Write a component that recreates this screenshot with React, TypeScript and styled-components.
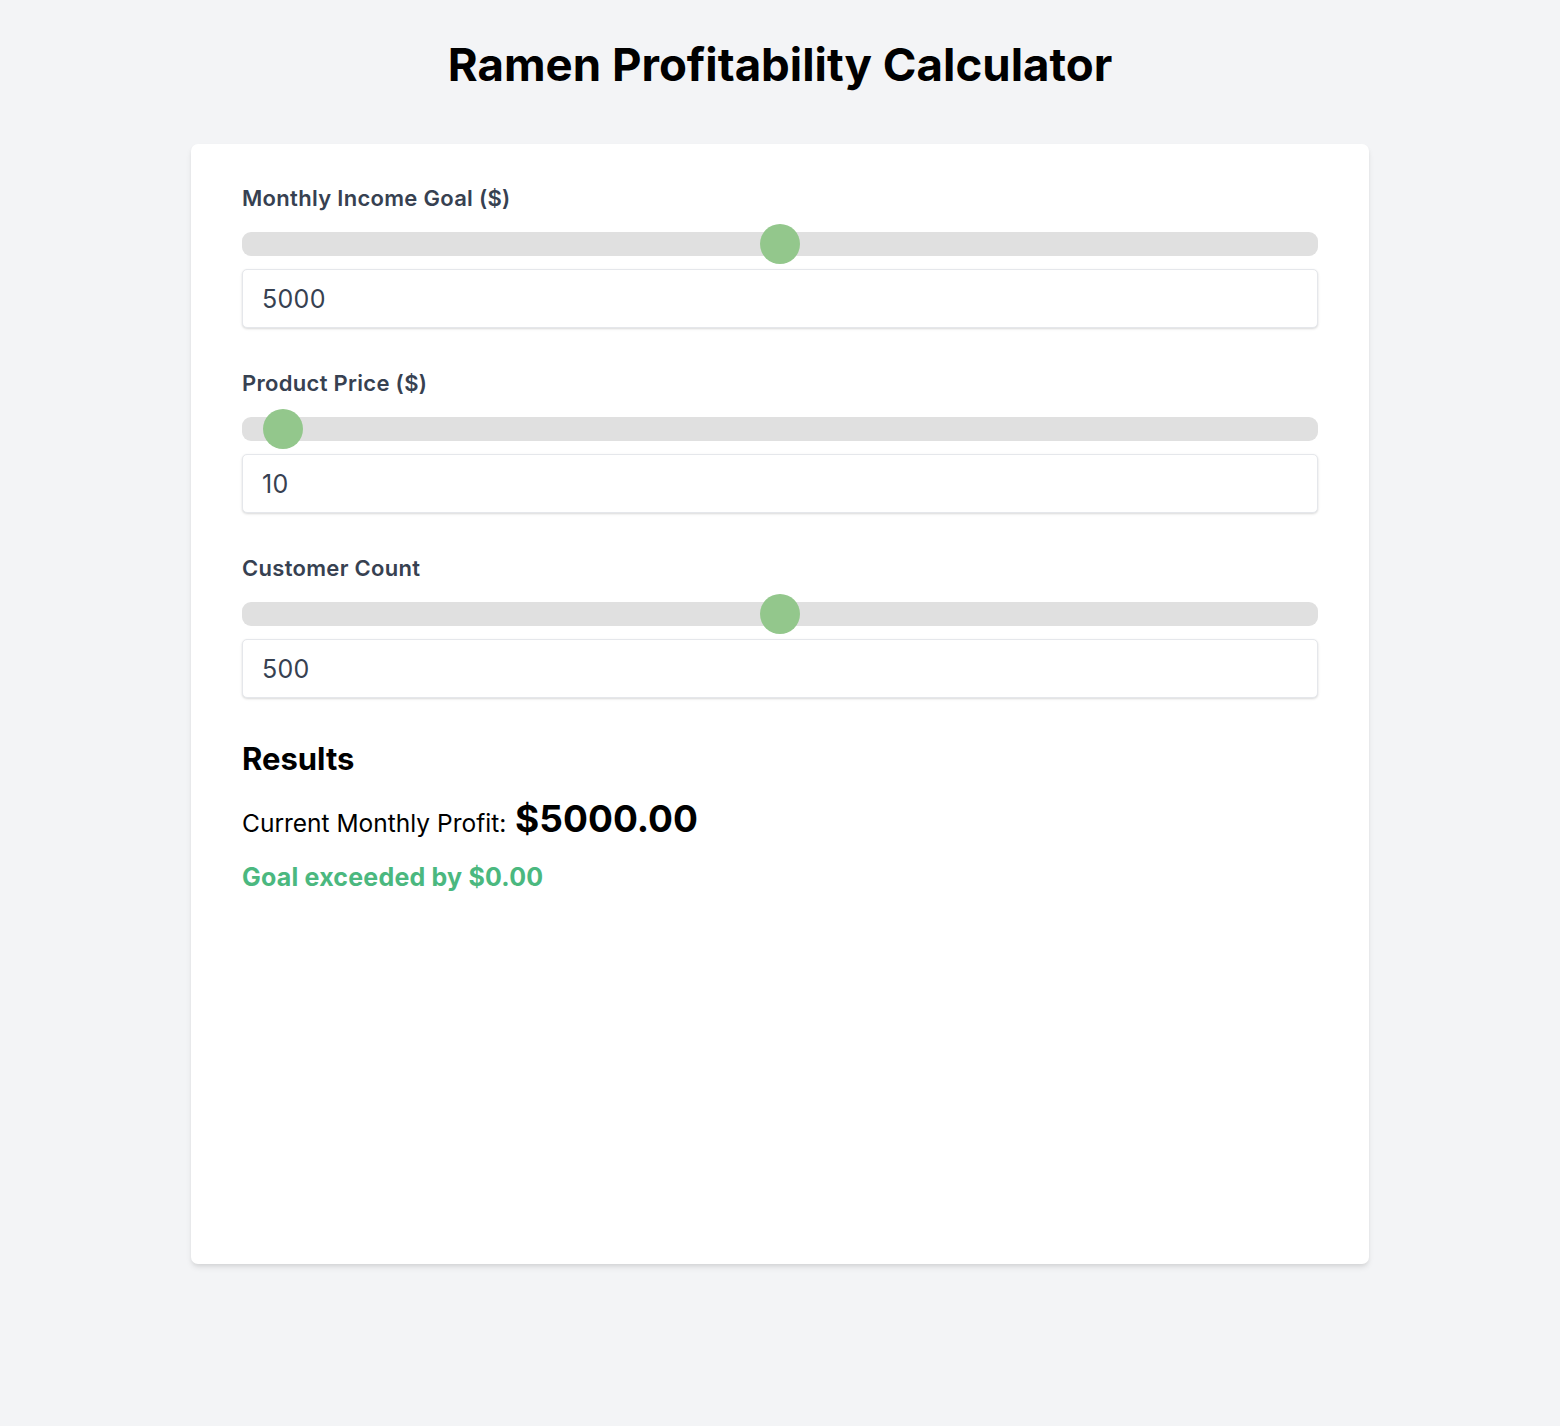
import React, { useState } from "react";
import styled, { createGlobalStyle } from "styled-components";

const GlobalStyle = createGlobalStyle`
  html, body {
    margin: 0;
    padding: 0;
    background: #f3f4f6;
    font-family: Inter, "Noto Sans", "Liberation Sans", sans-serif;
  }
  * { box-sizing: border-box; }
`;

const Page = styled.div`
  min-height: 1426px;
  padding-top: 37px;
  display: flex;
  flex-direction: column;
  align-items: center;
`;

const Title = styled.h1`
  margin: 0 0 51px;
  font-size: 45.6px;
  line-height: 56px;
  font-weight: 700;
  color: #000;
`;

const Card = styled.div`
  width: 1178px;
  min-height: 1120px;
  background: #fff;
  border-radius: 7px;
  box-shadow: 0 4px 6px -1px rgba(0, 0, 0, 0.1), 0 2px 4px -1px rgba(0, 0, 0, 0.06);
  padding: 40px 51px;
  display: flex;
  flex-direction: column;
`;

const Field = styled.div`
  display: flex;
  flex-direction: column;
  margin-bottom: 41px;
`;

const Label = styled.label`
  font-size: 22px;
  line-height: 28px;
  font-weight: 600;
  letter-spacing: 0.3px;
  color: #374151;
  margin-bottom: 12px;
`;

const Range = styled.input`
  -webkit-appearance: none;
  appearance: none;
  width: 100%;
  height: 40px;
  margin: 0 0 5px;
  background: transparent;
  outline: none;

  &::-webkit-slider-runnable-track {
    height: 24px;
    background: #e0e0e0;
    border-radius: 9px;
  }
  &::-webkit-slider-thumb {
    -webkit-appearance: none;
    appearance: none;
    width: 40px;
    height: 40px;
    border-radius: 50%;
    background: #93c78c;
    border: none;
    margin-top: -8px;
    cursor: pointer;
  }
  &::-moz-range-track {
    height: 24px;
    background: #e0e0e0;
    border-radius: 9px;
  }
  &::-moz-range-thumb {
    width: 40px;
    height: 40px;
    border-radius: 50%;
    background: #93c78c;
    border: none;
  }
`;

const NumberInput = styled.input`
  width: 100%;
  height: 59px;
  padding: 0 19px;
  border: 1px solid #e5e7eb;
  border-radius: 5px;
  box-shadow: 0 1px 3px 0 rgba(0, 0, 0, 0.1), 0 1px 2px 0 rgba(0, 0, 0, 0.06);
  font-family: Inter, "Noto Sans", sans-serif;
  font-size: 25px;
  letter-spacing: 0.3px;
  color: #374151;
  background: #fff;
  outline: none;
  -moz-appearance: textfield;
  &::-webkit-outer-spin-button,
  &::-webkit-inner-spin-button {
    -webkit-appearance: none;
    margin: 0;
  }
`;

const ResultsTitle = styled.h2`
  margin: 2px 0 22px;
  font-size: 31px;
  line-height: 36px;
  font-weight: 700;
  color: #000;
`;

const ProfitLine = styled.p`
  margin: 0 0 18px;
  font-size: 24.5px;
  line-height: 40px;
  color: #000;
`;

const ProfitValue = styled.span`
  font-size: 37px;
  font-weight: 700;
  margin-left: 2px;
`;

const GoalLine = styled.p<{ $ok: boolean }>`
  margin: 0;
  font-size: 25px;
  line-height: 32px;
  font-weight: 700;
  letter-spacing: 0.2px;
  color: ${(p) => (p.$ok ? "#4bb87f" : "#f56565")};
`;

type FieldDef = {
  key: "goal" | "price" | "count";
  label: string;
  min: number;
  max: number;
};

const fields: FieldDef[] = [
  { key: "goal", label: "Monthly Income Goal ($)", min: 0, max: 10000 },
  { key: "price", label: "Product Price ($)", min: 0, max: 500 },
  { key: "count", label: "Customer Count", min: 0, max: 1000 },
];

export default function App() {
  const [values, setValues] = useState({ goal: 5000, price: 10, count: 500 });
  const profit = values.price * values.count;
  const diff = profit - values.goal;

  const set = (k: FieldDef["key"], v: string) =>
    setValues((s) => ({ ...s, [k]: Number(v) }));

  return (
    <>
      <GlobalStyle />
      <Page>
        <Title>Ramen Profitability Calculator</Title>
        <Card>
          {fields.map((f) => (
            <Field key={f.key}>
              <Label>{f.label}</Label>
              <Range
                type="range"
                min={f.min}
                max={f.max}
                value={values[f.key]}
                onChange={(e) => set(f.key, e.target.value)}
              />
              <NumberInput
                type="number"
                value={values[f.key]}
                onChange={(e) => set(f.key, e.target.value)}
              />
            </Field>
          ))}
          <ResultsTitle>Results</ResultsTitle>
          <ProfitLine>
            Current Monthly Profit: <ProfitValue>${profit.toFixed(2)}</ProfitValue>
          </ProfitLine>
          <GoalLine $ok={diff >= 0}>
            {diff >= 0
              ? `Goal exceeded by $${diff.toFixed(2)}`
              : `Short of goal by $${Math.abs(diff).toFixed(2)}`}
          </GoalLine>
        </Card>
      </Page>
    </>
  );
}
